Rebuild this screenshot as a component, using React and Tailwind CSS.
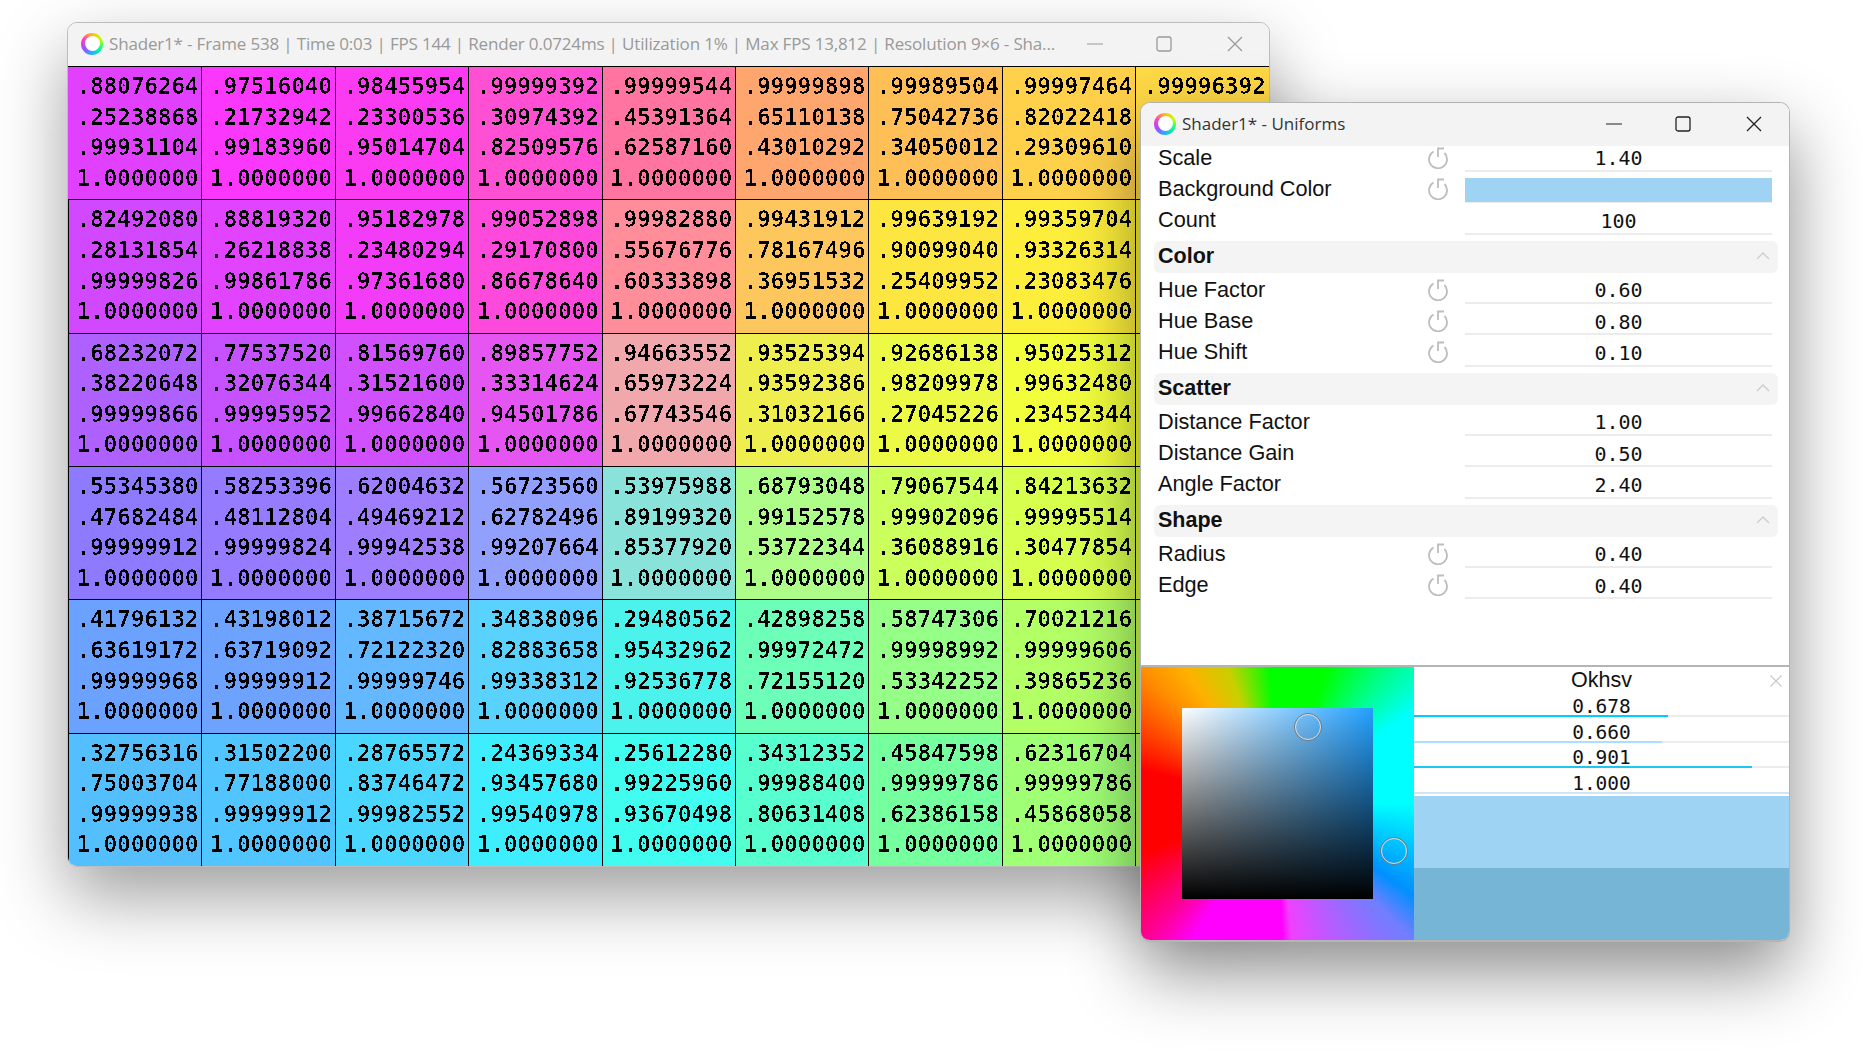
import React from "react";

const G = [
  [[".88076264",".25238868",".99931104"],[".97516040",".21732942",".99183960"],[".98455954",".23300536",".95014704"],[".99999392",".30974392",".82509576"],[".99999544",".45391364",".62587160"],[".99999898",".65110138",".43010292"],[".99989504",".75042736",".34050012"],[".99997464",".82022418",".29309610"]],
  [[".82492080",".28131854",".99999826"],[".88819320",".26218838",".99861786"],[".95182978",".23480294",".97361680"],[".99052898",".29170800",".86678640"],[".99982880",".55676776",".60333898"],[".99431912",".78167496",".36951532"],[".99639192",".90099040",".25409952"],[".99359704",".93326314",".23083476"]],
  [[".68232072",".38220648",".99999866"],[".77537520",".32076344",".99995952"],[".81569760",".31521600",".99662840"],[".89857752",".33314624",".94501786"],[".94663552",".65973224",".67743546"],[".93525394",".93592386",".31032166"],[".92686138",".98209978",".27045226"],[".95025312",".99632480",".23452344"]],
  [[".55345380",".47682484",".99999912"],[".58253396",".48112804",".99999824"],[".62004632",".49469212",".99942538"],[".56723560",".62782496",".99207664"],[".53975988",".89199320",".85377920"],[".68793048",".99152578",".53722344"],[".79067544",".99902096",".36088916"],[".84213632",".99995514",".30477854"]],
  [[".41796132",".63619172",".99999968"],[".43198012",".63719092",".99999912"],[".38715672",".72122320",".99999746"],[".34838096",".82883658",".99338312"],[".29480562",".95432962",".92536778"],[".42898258",".99972472",".72155120"],[".58747306",".99998992",".53342252"],[".70021216",".99999606",".39865236"]],
  [[".32756316",".75003704",".99999938"],[".31502200",".77188000",".99999912"],[".28765572",".83746472",".99982552"],[".24369334",".93457680",".99540978"],[".25612280",".99225960",".93670498"],[".34312352",".99988400",".80631408"],[".45847598",".99999786",".62386158"],[".62316704",".99999786",".45868058"]],
];
const LAST = [[1, 0.85, 0.27], [0.99, 0.96, 0.2], [0.96, 1, 0.2], [0.88, 1, 0.25], [0.8, 1, 0.3], [0.75, 1, 0.35]];

const rgb = (a) => `rgb(${a.map((v) => Math.round(parseFloat(v) * 255)).join(",")})`;

function Logo() {
  return (
    <div className="w-[22px] h-[22px] rounded-full flex items-center justify-center shrink-0 bg-[conic-gradient(#ffc000,#c0ff00,#00ff90,#20b0ff,#a050ff,#ff40c0,#ffc000)]">
      <div className="w-[15px] h-[15px] rounded-full bg-[radial-gradient(circle,#ffffff_55%,#f4f4ff_100%)] blur-[0.7px]" />
    </div>
  );
}

function Reset() {
  return (
    <svg width="22" height="22" viewBox="0 0 22 22" fill="none" stroke="#bdbdbd" strokeWidth="1.8" className="shrink-0">
      <path d="M6.5 4.5A9 9 0 1 0 17.5 6" />
      <path d="M11 10V1.5H17" />
    </svg>
  );
}

function Cell({ v, bg, only }) {
  return (
    <div
      className="h-[133.33px] border-t border-l border-black first:border-l-0 flex flex-col items-end pr-[3px] pt-[4px] overflow-hidden"
      style={{ backgroundColor: bg }}
    >
      <div className="[filter:url(#crisp)] font-['DejaVu_Sans_Mono',monospace] font-bold text-[23px] leading-[30.6px] tracking-[-0.3px] text-black">
        {only ? (
          <div>{only}</div>
        ) : (
          [...v, "1.0000000"].map((t, i) => <div key={i}>{t}</div>)
        )}
      </div>
    </div>
  );
}

function WinButtons({ color, gaps }) {
  return (
    <>
      <svg width="16" height="16" viewBox="0 0 16 16" className={`shrink-0 ${gaps[0]}`}>
        <path d="M0 8H16" stroke={color} strokeWidth="1.2" />
      </svg>
      <svg width="16" height="16" viewBox="0 0 16 16" fill="none" className={`shrink-0 ${gaps[1]}`}>
        <rect x="1" y="1" width="14" height="14" rx="2" stroke={color} strokeWidth="1.3" />
      </svg>
      <svg width="16" height="16" viewBox="0 0 16 16" fill="none" className={`shrink-0 ${gaps[2]}`}>
        <path d="M1 1L15 15M15 1L1 15" stroke={color} strokeWidth="1.3" />
      </svg>
    </>
  );
}

function MainWindow() {
  return (
    <div className="absolute left-[67px] top-[22px] w-[1203px] h-[845px] rounded-[10px] border border-[#bdbdbd] overflow-hidden bg-[#f3f3f3] shadow-[0_30px_70px_rgba(0,0,0,0.38)]">
      <div className="h-[43px] flex items-center pl-[13px] pb-[2px] bg-[#f3f3f3]">
        <Logo />
        <span className="ml-[6px] w-[955px] whitespace-nowrap font-['Open_Sans',sans-serif] text-[17px] tracking-[-0.17px] text-[#999999]">
          Shader1* - Frame 538 | Time 0:03 | FPS 144 | Render 0.0724ms | Utilization 1% | Max FPS 13,812 | Resolution 9×6 - Sha...
        </span>
        <WinButtons color="#9a9a9a" gaps={["ml-[23px]", "ml-[53px]", "ml-[55px]"]} />
      </div>
      <div className="grid grid-cols-[repeat(9,133.4px)]">
        {G.map((row, r) => (
          <React.Fragment key={r}>
            {row.map((v, c) => (
              <Cell key={c} v={v} bg={rgb(v)} />
            ))}
            <Cell bg={rgb(LAST[r])} only={r === 0 ? ".99996392" : " "} />
          </React.Fragment>
        ))}
      </div>
    </div>
  );
}

function Row({ label, value, reset, swatch }) {
  return (
    <div className="h-[31.33px] flex items-stretch pl-[17px] pr-[17px]">
      <div className="flex-1 flex items-center font-['Liberation_Sans',sans-serif] text-[21.7px] text-[#111111] pt-[3px]">{label}</div>
      <div className="w-[22px] mr-[16px] flex items-center justify-center pt-[3px]">{reset ? <Reset /> : null}</div>
      <div className={`w-[307px] border-b-2 border-[#ececec] flex items-center justify-center font-['DejaVu_Sans_Mono',monospace] text-[20px] text-[#111111] ${swatch ? "pt-[4px]" : "pt-[6px]"}`}>
        {swatch ? <div className="w-full h-[24px] bg-[#9fd3f3] mt-[2px]" /> : value}
      </div>
    </div>
  );
}

function Header({ label }) {
  return (
    <div className="mt-[6px] mb-0 ml-[13px] w-[624px] h-[32px] rounded-[6px] bg-[#f4f4f4] flex items-center justify-between pl-[4px] pr-[8px] pb-[2px]">
      <span className="font-['Liberation_Sans',sans-serif] font-bold text-[21.5px] text-[#111111]">{label}</span>
      <svg width="14" height="10" viewBox="0 0 14 10" fill="none" stroke="#cccccc" strokeWidth="1.3">
        <path d="M1 8L7 2L13 8" />
      </svg>
    </div>
  );
}

function Knob({ cls }) {
  return (
    <div className={`absolute w-[28px] h-[28px] rounded-full border border-[#777777] ${cls}`}>
      <div className="w-full h-full rounded-full border border-[#dddddd]" />
    </div>
  );
}

function Slider({ value, frac, color }) {
  return (
    <div className="h-[25.4px] shrink-0 flex flex-col">
      <div className="flex-1 min-h-0 flex items-center justify-center font-['DejaVu_Sans_Mono',monospace] text-[19.5px] leading-none text-[#111111] pt-[7px]">{value}</div>
      <div className="h-[2px] shrink-0 bg-[#ececec]">
        <div className="h-full" style={{ width: `${frac * 100}%`, backgroundColor: color }} />
      </div>
    </div>
  );
}

function Uniforms() {
  return (
    <div className="absolute left-[1140px] top-[102px] w-[650px] h-[840px] rounded-[10px] border border-[#b4b4b4] border-b-2 overflow-hidden bg-white flex flex-col shadow-[0_30px_70px_rgba(0,0,0,0.45)]">
      <div className="h-[43px] shrink-0 flex items-center pl-[13px] pb-[2px] bg-[#f3f3f3]">
        <Logo />
        <span className="ml-[6px] w-[420px] whitespace-nowrap font-['Open_Sans',sans-serif] text-[17px] text-[#333333]">Shader1* - Uniforms</span>
        <WinButtons color="#222222" gaps={["ml-[4px]", "ml-[53px]", "ml-[55px]"]} />
      </div>
      <div className="flex-1 overflow-hidden">
        <div className="-mt-[5.33px]">
          <Row label="Scale" value="1.40" reset />
          <Row label="Background Color" reset swatch />
          <Row label="Count" value="100" />
          <Header label="Color" />
          <Row label="Hue Factor" value="0.60" reset />
          <Row label="Hue Base" value="0.80" reset />
          <Row label="Hue Shift" value="0.10" reset />
          <Header label="Scatter" />
          <Row label="Distance Factor" value="1.00" />
          <Row label="Distance Gain" value="0.50" />
          <Row label="Angle Factor" value="2.40" />
          <Header label="Shape" />
          <Row label="Radius" value="0.40" reset />
          <Row label="Edge" value="0.40" reset />
        </div>
      </div>
      <div className="h-[275px] shrink-0 border-t-2 border-[#b4b4b4] flex">
        <div className="relative w-[273px] shrink-0 flex items-center justify-center bg-[conic-gradient(#00ff00_0deg,#00ff00_20deg,#00ffb0_45deg,#00ffff_56deg,#00ffff_90deg,#0090ff_124deg,#6f7fff_135deg,#f040ff_174deg,#ff00ff_178deg,#ff00ff_212deg,#ff0090_225deg,#ff0000_250deg,#ff0000_284deg,#ff9000_315deg,#ffb000_325deg,#c8d000_340deg,#00ff00_357deg,#00ff00_360deg)]">
          <div className="w-[191px] h-[191px] bg-[linear-gradient(to_top,#000000,rgba(0,0,0,0)),linear-gradient(to_right,#ffffff,#22a0ff)]" />
          <Knob cls="left-[153px] top-[46px]" />
          <Knob cls="left-[239px] top-[170px]" />
        </div>
        <div className="flex-1 flex flex-col">
          <div className="h-[25px] shrink-0 flex items-center justify-center relative font-['Liberation_Sans',sans-serif] text-[21.5px] text-[#111111] pt-[2px]">
            Okhsv
            <svg width="12" height="12" viewBox="0 0 12 12" fill="none" stroke="#cccccc" strokeWidth="1.3" className="absolute right-[7px] top-[8px]">
              <path d="M0.5 0.5L11.5 11.5M11.5 0.5L0.5 11.5" />
            </svg>
          </div>
          <Slider value="0.678" frac={0.678} color="#00ccff" />
          <Slider value="0.660" frac={0.66} color="#a9e0ff" />
          <Slider value="0.901" frac={0.901} color="#1cc8f0" />
          <Slider value="1.000" frac={1} color="#cfe5f5" />
          <div className="h-[2px] shrink-0 bg-white" />
          <div className="h-[72px] shrink-0 bg-[#9fd3f3]" />
          <div className="flex-1 bg-[#77b5d7]" />
        </div>
      </div>
    </div>
  );
}

export default function App() {
  return (
    <div className="relative w-[1863px] h-[1063px] bg-white overflow-hidden">
      <svg className="absolute w-0 h-0">
        <filter id="crisp" colorInterpolationFilters="sRGB" x="0" y="0" width="100%" height="100%">
          <feComponentTransfer>
            <feFuncA type="discrete" tableValues="0 0 0 1" />
          </feComponentTransfer>
        </filter>
      </svg>
      <MainWindow />
      <Uniforms />
    </div>
  );
}
